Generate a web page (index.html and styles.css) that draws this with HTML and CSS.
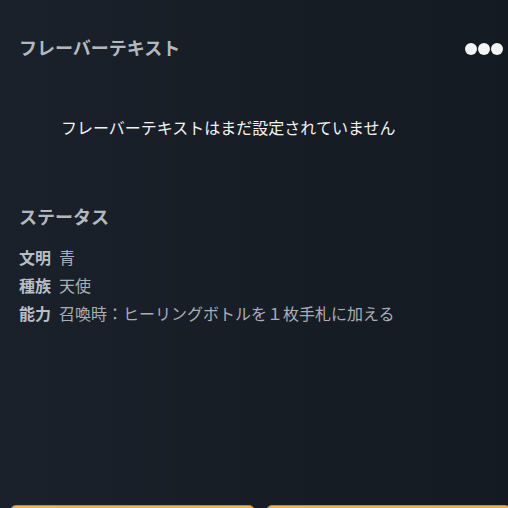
FILE: index.html
```html
<!DOCTYPE html>
<html lang="ja">
<head>
  <meta charset="UTF-8" />
  <meta name="viewport" content="width=device-width, initial-scale=1" />
  <title>カード詳細</title>
  <link rel="stylesheet" href="styles.css">
</head>
<body>
  <div class="card-detail">
    <div class="section-header">
      <h2 class="section-title">フレーバーテキスト</h2>
      <button class="more-button" aria-label="メニュー">
        <span class="dot"></span><span class="dot"></span><span class="dot"></span>
      </button>
    </div>
    <p class="flavor-text">フレーバーテキストはまだ設定されていません</p>

    <h2 class="section-title status-title">ステータス</h2>
    <dl class="status-list">
      <div class="status-row"><dt>文明</dt><dd>青</dd></div>
      <div class="status-row"><dt>種族</dt><dd>天使</dd></div>
      <div class="status-row"><dt>能力</dt><dd>召喚時：ヒーリングボトルを１枚手札に加える</dd></div>
    </dl>

    <div class="action-bar">
      <button class="action-button"></button>
      <button class="action-button"></button>
    </div>
  </div>
</body>
</html>
```

FILE: styles.css
```css
:root {
  --bg-left: #1a212a;
  --bg-right: #141a22;
  --title: #b3b8bf;
  --text: #f2f2f2;
  --label: #b9bec5;
  --value: #a9afb6;
  --accent: #f3b33d;
  --accent-dark: #c98a1e;
}

body {
  margin: 0;
  background: linear-gradient(90deg, var(--bg-left), var(--bg-right));
  font-family: "Noto Sans CJK JP", "Noto Sans", sans-serif;
  font-size: 16px;
  color: var(--text);
}

.card-detail {
  box-sizing: border-box;
  height: 100vh;
  overflow: hidden;
  padding: 35px 0 0 19px;
}

.section-header {
  display: flex;
  align-items: center;
  justify-content: space-between;
  padding-right: 5px;
}

.section-title {
  margin: 0;
  font-size: 18px;
  line-height: 24px;
  font-weight: bold;
  color: var(--title);
}

.more-button {
  display: flex;
  gap: 1px;
  padding: 0;
  margin-top: 4px;
  background: none;
  border: none;
  cursor: pointer;
}

.dot {
  width: 12px;
  height: 12px;
  border-radius: 50%;
  background: #f4f4f6;
}

.flavor-text {
  margin: 56px 0 0 42px;
  line-height: 24px;
  font-size: 16px;
}

.status-title {
  margin-top: 65px;
}

.status-list {
  margin: 15px 0 0;
}

.status-row {
  display: flex;
  gap: 8px;
  line-height: 28px;
  font-size: 16px;
}

.status-row dt {
  font-weight: bold;
  color: var(--label);
}

.status-row dd {
  margin: 0;
  color: var(--value);
}

.action-bar {
  display: grid;
  grid-template-columns: 245px 245px;
  gap: 11px;
  margin: 178px 0 0 -9px;
}

.action-button {
  height: 44px;
  background: var(--accent);
  border: 1px solid var(--accent-dark);
  border-radius: 6px;
  cursor: pointer;
}
```
